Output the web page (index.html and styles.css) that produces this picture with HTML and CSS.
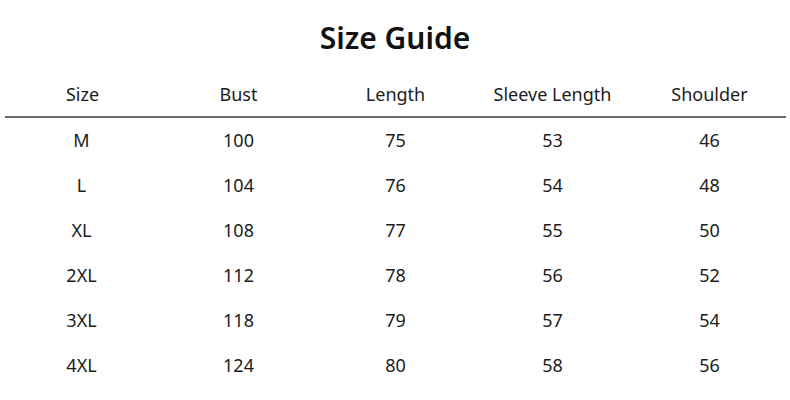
FILE: index.html
```html
<!DOCTYPE html>
<html>
<head>
<meta charset="utf-8">
<link rel="stylesheet" href="styles.css">
</head>
<body>
<div class="page">
  <h1 class="title">Size Guide</h1>
  <div class="table">
    <div class="row head">
      <div>Size</div><div>Bust</div><div>Length</div><div>Sleeve Length</div><div>Shoulder</div>
    </div>
    <div class="row"><div>M</div><div>100</div><div>75</div><div>53</div><div>46</div></div>
    <div class="row"><div>L</div><div>104</div><div>76</div><div>54</div><div>48</div></div>
    <div class="row"><div>XL</div><div>108</div><div>77</div><div>55</div><div>50</div></div>
    <div class="row"><div>2XL</div><div>112</div><div>78</div><div>56</div><div>52</div></div>
    <div class="row"><div>3XL</div><div>118</div><div>79</div><div>57</div><div>54</div></div>
    <div class="row"><div>4XL</div><div>124</div><div>80</div><div>58</div><div>56</div></div>
  </div>
</div>
</body>
</html>
```
FILE: styles.css
```css
html, body {
  margin: 0;
  padding: 0;
  background: #fff;
}
body {
  width: 790px;
  height: 400px;
  overflow: hidden;
  font-family: "Noto Sans", "Open Sans", sans-serif;
  color: #1c1c1c;
}
.page {
  padding-top: 18px;
}
.title {
  margin: 0;
  text-align: center;
  font-size: 30px;
  font-weight: 600;
  line-height: 40px;
  color: #111;
}
.table {
  margin-top: 13px;
  padding: 0 3px 0 3px;
}
.row {
  box-sizing: border-box;
  display: grid;
  grid-template-columns: repeat(5, 157px);
  height: 45px;
  padding-bottom: 2px;
  align-items: center;
  font-size: 18px;
}
.row > div {
  text-align: center;
}
.row.head {
  height: 47px;
  padding-bottom: 0;
  border-bottom: 2px solid #6a6a6a;
  margin: 0 1px 0 2px;
  grid-template-columns: 155px 157px 157px 157px 157px;
}
```
